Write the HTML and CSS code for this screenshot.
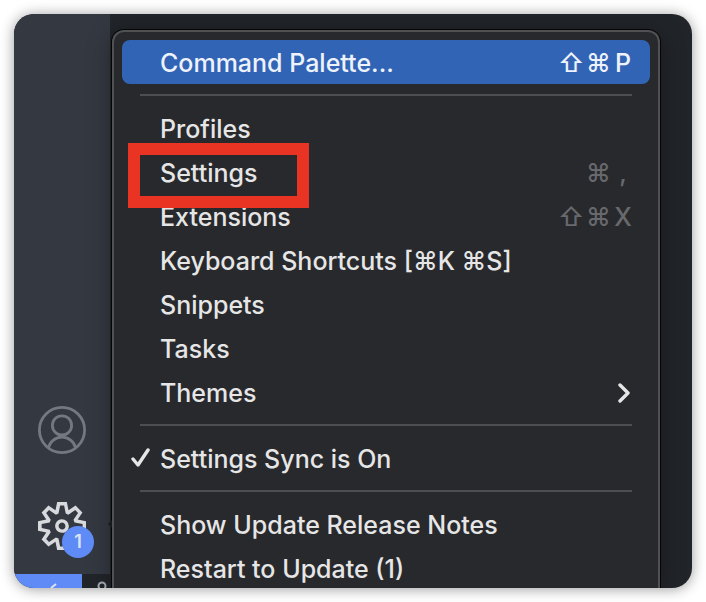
FILE: index.html
```html
<!DOCTYPE html>
<html lang="en">
<head>
    <meta charset="UTF-8">
    <meta name="viewport" content="width=device-width, initial-scale=1.0">
    <title>Manage Menu</title>
    <link rel="stylesheet" href="styles.css">
</head>
<body>
    <div class="window">
        <div class="side">
            <div class="activity-bar">
                <button class="activity" aria-label="Accounts">
                    <svg viewBox="0 0 24 24" fill="none" stroke="currentColor" stroke-width="1.4">
                        <circle cx="12" cy="12" r="11.3"/>
                        <circle cx="12" cy="9.7" r="4.8"/>
                        <path d="M5.2 20.9a7 7 0 0 1 13.6 0"/>
                    </svg>
                </button>
                <button class="activity active" aria-label="Manage">
                    <svg viewBox="0 0 24 24" fill="currentColor">
                        <path fill-rule="evenodd" d="M19.85 8.75l4.15.83v4.84l-4.15.83 2.35 3.52-3.43 3.43-3.52-2.35-.83 4.15H9.58l-.83-4.15-3.52 2.35-3.43-3.43 2.35-3.52L0 14.42V9.58l4.15-.83L1.8 5.23 5.23 1.8l3.52 2.35L9.58 0h4.84l.83 4.15 3.52-2.35 3.43 3.43-2.35 3.52zm-1.57 5.07l4-.81v-2l-4-.81-.54-1.3 2.29-3.43-1.43-1.43-3.43 2.29-1.3-.54-.81-4h-2l-.81 4-1.3.54-3.43-2.29-1.43 1.43L6.38 8.9l-.54 1.3-4 .81v2l4 .81.54 1.3-2.29 3.43 1.43 1.43 3.43-2.29 1.3.54.81 4h2l.81-4 1.3-.54 3.43 2.29 1.43-1.43-2.29-3.43.54-1.3zm-8.186-4.672A3.43 3.43 0 0 1 12 8.57 3.44 3.44 0 0 1 15.43 12a3.43 3.43 0 1 1-5.336-2.852zm.956 4.274c.281.188.612.288.95.288A1.7 1.7 0 0 0 13.71 12a1.71 1.71 0 1 0-2.66 1.422z"/>
                    </svg>
                    <span class="badge">1</span>
                </button>
            </div>
            <div class="status-bar">
                <div class="remote">
                    <svg viewBox="0 0 68 14" fill="none" stroke="currentColor" stroke-width="2">
                        <path d="M37 14l5-4"/>
                    </svg>
                </div>
                <div class="branch">
                    <svg viewBox="0 0 28 14" fill="none" stroke="currentColor" stroke-width="2">
                        <circle cx="20" cy="12" r="3.5"/>
                    </svg>
                </div>
            </div>
        </div>

        <div class="menu" role="menu">
            <button class="item selected" role="menuitem">
                <span class="label">Command Palette...</span>
                <span class="keys"><kbd>⇧</kbd><kbd>⌘</kbd><kbd>P</kbd></span>
            </button>
            <hr class="separator">
            <button class="item" role="menuitem">
                <span class="label">Profiles</span>
            </button>
            <button class="item marked" role="menuitem">
                <span class="label">Settings</span>
                <span class="keys"><kbd>⌘</kbd><kbd>,</kbd></span>
            </button>
            <button class="item" role="menuitem">
                <span class="label">Extensions</span>
                <span class="keys"><kbd>⇧</kbd><kbd>⌘</kbd><kbd>X</kbd></span>
            </button>
            <button class="item" role="menuitem">
                <span class="label">Keyboard Shortcuts [⌘K ⌘S]</span>
            </button>
            <button class="item" role="menuitem">
                <span class="label">Snippets</span>
            </button>
            <button class="item" role="menuitem">
                <span class="label">Tasks</span>
            </button>
            <button class="item" role="menuitem" aria-haspopup="true">
                <span class="label">Themes</span>
                <svg class="chevron" viewBox="0 0 14 20" fill="none" stroke="currentColor" stroke-width="3.4" stroke-linecap="round" stroke-linejoin="round">
                    <path d="M2 2l8 8-8 8"/>
                </svg>
            </button>
            <hr class="separator">
            <button class="item" role="menuitemcheckbox" aria-checked="true">
                <svg class="check" viewBox="0 0 20 20" fill="none" stroke="currentColor" stroke-width="3.4" stroke-linecap="round" stroke-linejoin="round">
                    <path d="M3 11l5 6L18 2"/>
                </svg>
                <span class="label">Settings Sync is On</span>
            </button>
            <hr class="separator">
            <button class="item" role="menuitem">
                <span class="label">Show Update Release Notes</span>
            </button>
            <button class="item" role="menuitem">
                <span class="label">Restart to Update (1)</span>
            </button>
        </div>
    </div>
</body>
</html>
```
FILE: styles.css
```css
*,
*::before,
*::after {
    box-sizing: border-box;
}

body {
    margin: 0;
    padding: 14px;
    height: 100vh;
    background-color: #fff;
    font-family: Inter, "Liberation Sans", sans-serif;
}

.window {
    display: flex;
    height: 100%;
    overflow: hidden;
    border-radius: 20px;
    background-color: #212429;
    box-shadow: 0 1px 14px rgba(0, 0, 0, 0.4);
}

.side {
    display: flex;
    flex-direction: column;
    width: 96px;
}

.activity-bar {
    flex: 1;
    display: flex;
    flex-direction: column;
    justify-content: flex-end;
    align-items: center;
    gap: 48px;
    padding-bottom: 24px;
    background-color: #343841;
}

.activity {
    position: relative;
    width: 48px;
    height: 48px;
    padding: 0;
    border: none;
    background: none;
    color: #747881;
    cursor: pointer;
}

.activity svg {
    display: block;
    width: 48px;
    height: 48px;
}

.activity.active {
    color: #d7d9dd;
}

/* tip of the tooltip hidden behind the menu */
.activity.active::after {
    content: "";
    position: absolute;
    top: 18px;
    right: -26px;
    border: 4px solid transparent;
    border-left: none;
    border-right-color: #17191d;
}

.badge {
    position: absolute;
    right: -8px;
    bottom: -8px;
    width: 32px;
    height: 32px;
    border-radius: 50%;
    background-color: #5f8bf7;
    color: #dce3f5;
    font-family: Inter, "Liberation Sans", sans-serif;
    font-size: 18px;
    font-weight: 600;
    line-height: 32px;
    text-align: center;
}

.status-bar {
    display: flex;
    height: 14px;
    color: #a5abb6;
}

.status-bar svg {
    display: block;
    height: 14px;
}

.remote {
    flex: 1;
    background-color: #5f8bf7;
    color: #dce3f5;
}

.branch {
    width: 28px;
}

.menu {
    flex: 1;
    margin: 16px 32px 0 2px;
    padding: 8px;
    border: 2px solid #505153;
    border-bottom: none;
    border-radius: 12px 12px 0 0;
    background-color: #28292c;
    box-shadow: 0 0 0 1px #050505, 0 4px 24px rgba(0, 0, 0, 0.35);
}

.item {
    position: relative;
    display: flex;
    align-items: center;
    justify-content: space-between;
    width: 100%;
    height: 44px;
    padding: 2px 18px 0 38px;
    border: none;
    border-radius: 8px;
    background: none;
    color: #e6e6e7;
    font-family: inherit;
    font-size: 25px;
    font-weight: 500;
    line-height: 42px;
    text-align: left;
    white-space: nowrap;
    cursor: pointer;
}

.item.selected {
    background-color: #3264b6;
    color: #eef2fa;
}

/* red frame round the highlighted entry */
.item.marked::after {
    content: "";
    position: absolute;
    z-index: 1;
    top: -7px;
    left: 6px;
    width: 181px;
    height: 65px;
    border: 12px solid #e93323;
}

.keys {
    display: flex;
    gap: 4px;
    color: #68696c;
}

.selected .keys {
    color: inherit;
}

.keys kbd {
    width: 24px;
    font-family: inherit;
    text-align: center;
}

.keys kbd:last-child {
    width: 18px;
}

.separator {
    height: 2px;
    margin: 10px 18px;
    border: none;
    background-color: #4d4e51;
}

.chevron {
    width: 14px;
    height: 20px;
}

.check {
    position: absolute;
    top: 12px;
    left: 8px;
    width: 20px;
    height: 20px;
}
```
